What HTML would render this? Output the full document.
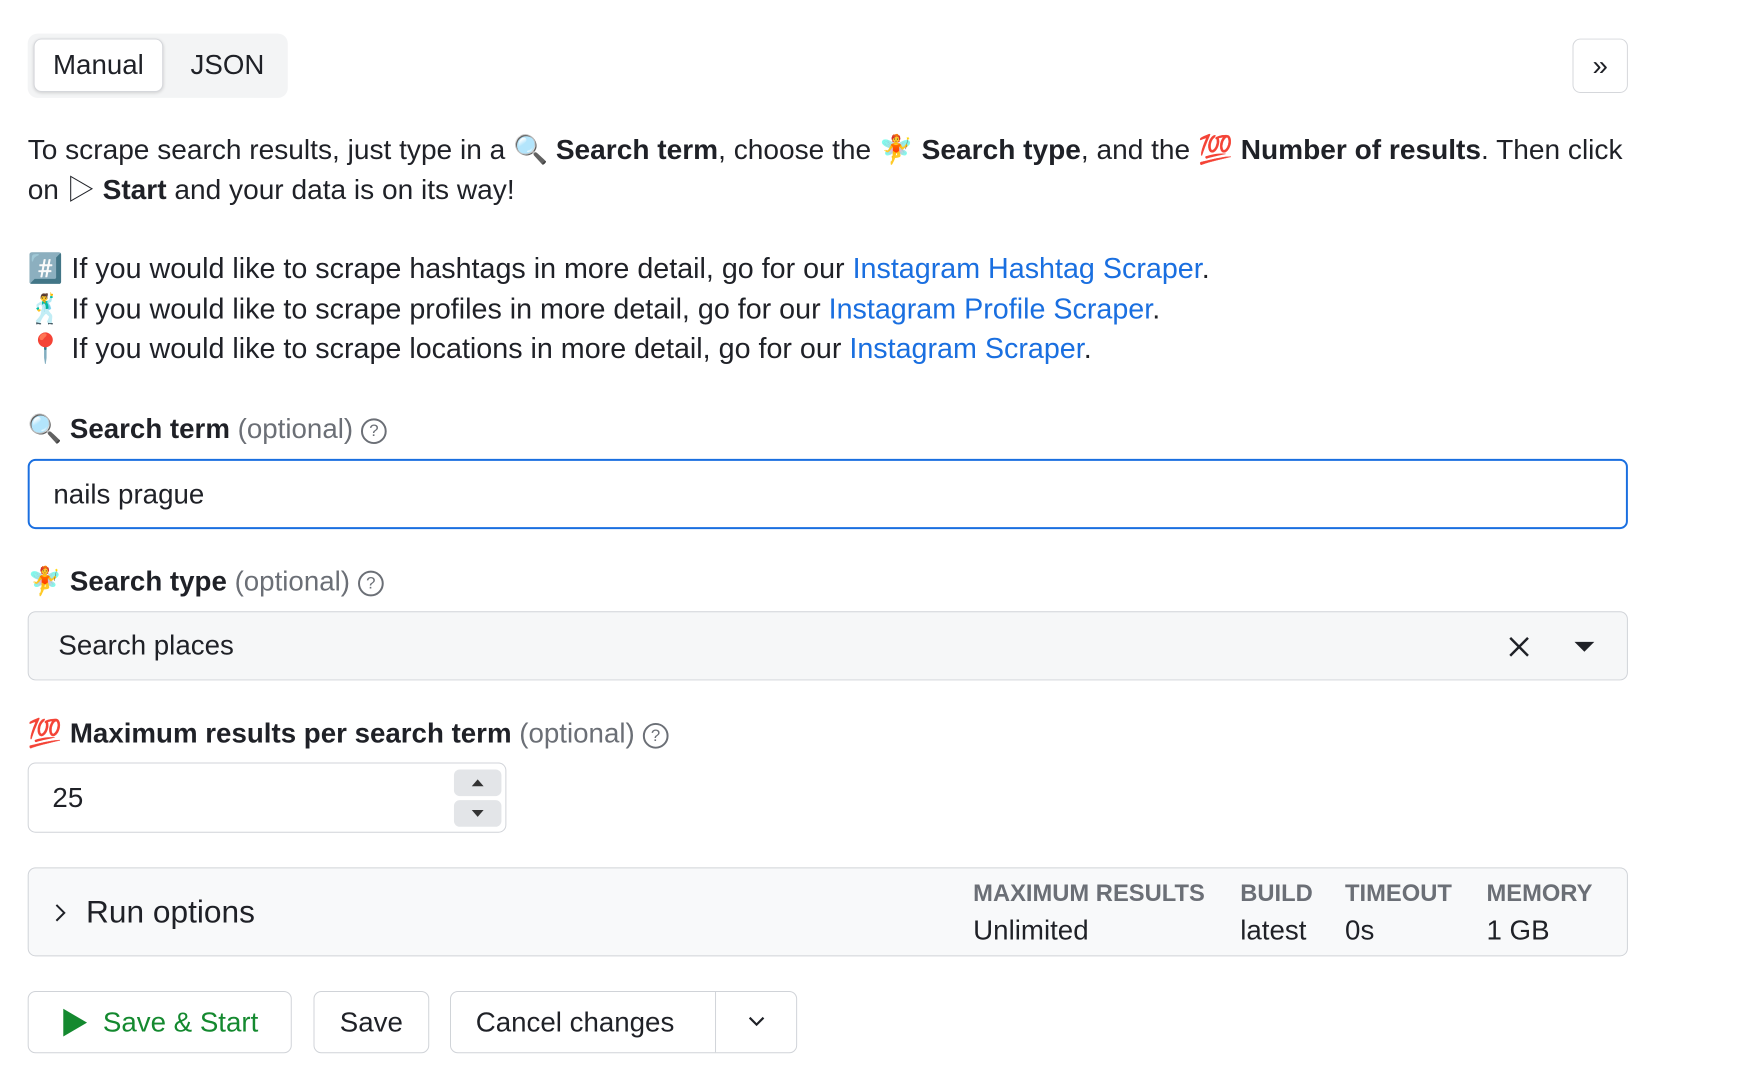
<!DOCTYPE html>
<html><head><meta charset="utf-8"><style>
*{box-sizing:border-box;margin:0;padding:0}
body{width:1738px;height:1076px;background:#fff;font-family:"Liberation Sans","Noto Sans CJK JP",sans-serif;color:#1f2127;position:relative;overflow:hidden}
#w{position:absolute;left:0;top:0;width:1760px;height:1090px;transform:scale(0.989);transform-origin:0 0}
.abs{position:absolute}
.tabs{left:28px;top:34px;width:263px;height:65px;background:#f3f4f5;border-radius:10px}
.manual{left:34px;top:39px;width:131px;height:54px;background:#fff;border:1px solid #d5d7db;border-radius:8px;box-shadow:0 1px 3px rgba(0,0,0,.15);font-size:28px;display:flex;align-items:center;justify-content:center}
.json{left:180px;top:39px;width:100px;height:54px;font-size:28px;display:flex;align-items:center;justify-content:center}
.exp{left:1590px;top:39px;width:56px;height:55px;border:1px solid #d5d7db;border-radius:8px;font-size:28px;display:flex;align-items:center;justify-content:center}
.p{left:28px;font-size:28.4px;white-space:nowrap;line-height:40px}
.p2{font-size:29px}
a{color:#1a6fe0;text-decoration:none}
b{font-weight:bold}
.lbl{left:28px;font-size:28px;white-space:nowrap;font-weight:bold}
.lbl span.o{font-weight:normal;color:#6b6f76}
.q{display:inline-block;width:26px;height:26px;border:2px solid #6b6f76;border-radius:50%;font-size:17px;text-align:center;line-height:22px;color:#6b6f76;font-weight:normal;vertical-align:2px;margin-left:8px}
.box{border:1px solid #d0d3d8;border-radius:8px}
</style></head><body><div id="w">
<div class="abs tabs"></div>
<div class="abs manual">Manual</div>
<div class="abs json">JSON</div>
<div class="abs exp">»</div>

<div class="abs p" style="top:132px">To scrape search results, just type in a 🔍 <b>Search term</b>, choose the 🧚 <b>Search type</b>, and the 💯 <b>Number of results</b>. Then click</div>
<div class="abs p" style="top:172px">on ▷ <b>Start</b> and your data is on its way!</div>
<div class="abs p p2" style="top:252px">#️⃣ If you would like to scrape hashtags in more detail, go for our <a>Instagram Hashtag Scraper</a>.</div>
<div class="abs p p2" style="top:293px">🕺 If you would like to scrape profiles in more detail, go for our <a>Instagram Profile Scraper</a>.</div>
<div class="abs p p2" style="top:333px">📍 If you would like to scrape locations in more detail, go for our <a>Instagram Scraper</a>.</div>

<div class="abs lbl" style="top:417px">🔍 Search term <span class="o">(optional)</span><span class="q">?</span></div>
<div class="abs" style="left:28px;top:464px;width:1618px;height:71px;border:2px solid #1a6fe0;border-radius:8px;font-size:28px;padding-left:24px;line-height:67px">nails prague</div>

<div class="abs lbl" style="top:571px">🧚 Search type <span class="o">(optional)</span><span class="q">?</span></div>
<div class="abs box" style="left:28px;top:618px;width:1618px;height:70px;background:#f6f7f8;font-size:28px;padding-left:30px;line-height:68px">Search places
<svg class="abs" style="left:1496px;top:24px" width="22" height="22" viewBox="0 0 22 22"><path d="M2 2L20 20M20 2L2 20" stroke="#1f2127" stroke-width="2.5"/></svg>
<svg class="abs" style="left:1562px;top:29px" width="22" height="12" viewBox="0 0 22 12"><path d="M1 1H21L11 11Z" fill="#1f2127"/></svg></div>

<div class="abs lbl" style="top:725px">💯 Maximum results per search term <span class="o">(optional)</span><span class="q">?</span></div>
<div class="abs box" style="left:28px;top:771px;width:484px;height:71px;font-size:28px;padding-left:24px;line-height:69px">25
<div class="abs" style="left:430px;top:6px;width:48px;height:27px;background:#e3e5e8;border-radius:6px"></div>
<div class="abs" style="left:430px;top:37px;width:48px;height:27px;background:#e3e5e8;border-radius:6px"></div>
<svg class="abs" style="left:447px;top:15px" width="14" height="9"><path d="M1 8H13L7 1Z" fill="#333"/></svg>
<svg class="abs" style="left:447px;top:46px" width="14" height="9"><path d="M1 1H13L7 8Z" fill="#333"/></svg></div>

<div class="abs box" style="left:28px;top:877px;width:1618px;height:90px;background:#f8f9fa">
<svg class="abs" style="left:26px;top:35px" width="12" height="20"><path d="M2 2L10 10L2 18" stroke="#1f2127" stroke-width="2" fill="none"/></svg>
<div class="abs" style="left:58px;top:26px;font-size:32px">Run options</div>
<div class="abs" style="left:955px;top:12px;font-size:24px;font-weight:bold;color:#6b6f76">MAXIMUM RESULTS</div>
<div class="abs" style="left:1225px;top:12px;font-size:24px;font-weight:bold;color:#6b6f76">BUILD</div>
<div class="abs" style="left:1331px;top:12px;font-size:24px;font-weight:bold;color:#6b6f76">TIMEOUT</div>
<div class="abs" style="left:1474px;top:12px;font-size:24px;font-weight:bold;color:#6b6f76">MEMORY</div>
<div class="abs" style="left:955px;top:47px;font-size:28px">Unlimited</div>
<div class="abs" style="left:1225px;top:47px;font-size:28px">latest</div>
<div class="abs" style="left:1331px;top:47px;font-size:28px">0s</div>
<div class="abs" style="left:1474px;top:47px;font-size:28px">1 GB</div>
</div>

<div class="abs box" style="left:28px;top:1002px;width:267px;height:63px;font-size:28px;color:#14892f;line-height:61px;padding-left:75px">Save &amp; Start
<svg class="abs" style="left:34px;top:16px" width="26" height="30"><path d="M1 1L25 15L1 29Z" fill="#14892f"/></svg></div>
<div class="abs box" style="left:317px;top:1002px;width:117px;height:63px;font-size:28px;line-height:61px;text-align:center">Save</div>
<div class="abs box" style="left:455px;top:1002px;width:351px;height:63px;font-size:28px;line-height:61px;padding-left:25px">Cancel changes
<div class="abs" style="left:267px;top:0;width:1px;height:61px;background:#d0d3d8"></div>
<svg class="abs" style="left:300px;top:24px" width="18" height="12"><path d="M2 2L9 9L16 2" stroke="#1f2127" stroke-width="2.2" fill="none"/></svg></div>
</div></body></html>
